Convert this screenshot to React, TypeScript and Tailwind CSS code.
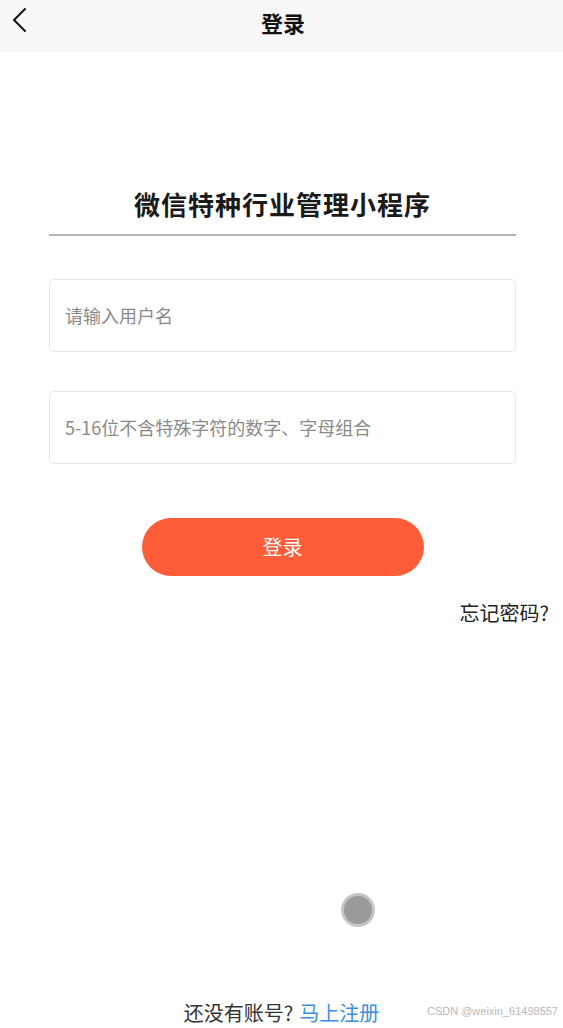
const font = "font-['Noto_Sans_CJK_SC','Noto_Sans',sans-serif]";

const App = () => {
  return (
    <div className={`relative w-[563px] h-[1028px] bg-white overflow-hidden flex flex-col ${font}`}>
      {/* 顶部导航 */}
      <header className="relative h-[52px] bg-[#f7f7f7] flex items-center justify-center">
        <svg
          className="absolute left-[10px] top-[7px]"
          width="18"
          height="26"
          viewBox="0 0 18 26"
          fill="none"
          stroke="#111"
          strokeWidth="2"
          strokeLinecap="round"
          strokeLinejoin="round"
        >
          <path d="M15 2 L4 13 L15 24" />
        </svg>
        <span className="text-[22px] font-bold text-[#111] leading-none -mt-[8px] ml-[3px]">登录</span>
      </header>

      <main className="flex flex-col items-center pl-[49px] pr-[47px]">
        <h1 className="mt-[132px] text-[26px] font-bold text-[#1a1a1a] leading-[40px] tracking-[1px]">
          微信特种行业管理小程序
        </h1>
        <div className="w-full h-[2px] bg-[#b3b3b8] mt-[10px]"></div>

        <div className="w-full h-[73px] mt-[43px] border border-[#e6e6e6] rounded-[5px] flex items-center px-[15px]">
          <input
            className="w-full outline-none text-[18px] text-[#333] placeholder:text-[#8a8a8a] bg-transparent"
            placeholder="请输入用户名"
          />
        </div>
        <div className="w-full h-[73px] mt-[39px] border border-[#e6e6e6] rounded-[5px] flex items-center px-[15px]">
          <input
            type="password"
            className="w-full outline-none text-[18px] text-[#333] placeholder:text-[#8a8a8a] bg-transparent"
            placeholder="5-16位不含特殊字符的数字、字母组合"
          />
        </div>

        <button className="mt-[54px] w-[282px] h-[58px] rounded-full bg-[#ff5c39] text-white text-[20px]">
          登录
        </button>
      </main>

      <div className="flex justify-end pr-[14px] mt-[22px]">
        <span className="text-[20px] text-[#222]">忘记密码?</span>
      </div>

      {/* 悬浮按钮 */}
      <div className="absolute left-[341px] top-[893px] w-[34px] h-[34px] rounded-full bg-[#c4c4c4] flex items-center justify-center">
        <div className="w-[28px] h-[28px] rounded-full bg-[#9a9a9a]"></div>
      </div>

      <div className="mt-auto h-[34px] flex items-center relative">
        <div className="w-full flex justify-center text-[20px] pt-[4px]">
          <span className="text-[#333]">还没有账号?</span>
          <span className="text-[#3b8ee8] ml-[6px]">马上注册</span>
        </div>
        <span className="absolute right-[5px] top-[9px] text-[11px] text-[#b8b8b8] font-['Liberation_Sans',sans-serif]">
          CSDN @weixin_61498557
        </span>
      </div>
    </div>
  );
};

export default App;
